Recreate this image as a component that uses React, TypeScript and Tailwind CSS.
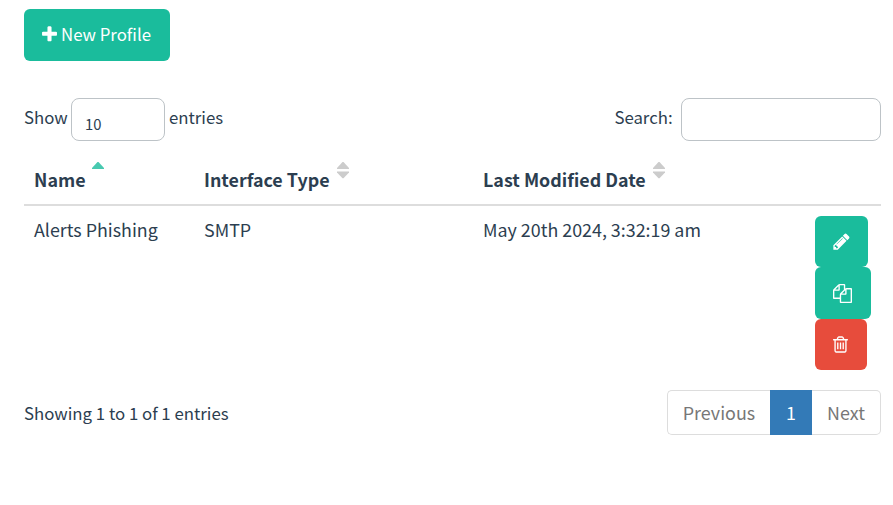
import type { ReactNode } from "react";

const PLUS =
  "M1600 736v192q0 40-28 68t-68 28h-416v416q0 40-28 68t-68 28h-192q-40 0-68-28t-28-68v-416h-416q-40 0-68-28t-28-68v-192q0-40 28-68t68-28h416v-416q0-40 28-68t68-28h192q40 0 68 28t28 68v416h416q40 0 68 28t28 68z";
const PENCIL =
  "M491 1536l91-91-235-235-91 91v107h128v128h107zm523-928q0-22-22-22-10 0-17 7l-542 542q-7 7-7 17 0 22 22 22 10 0 17-7l542-542q7-7 7-17zm-54-192l416 416-832 832h-416v-416zm683 96q0 53-37 90l-166 166-416-416 166-165q36-38 90-38 53 0 91 38l235 234q37 39 37 91z";
const FILES =
  "M1696 384q40 0 68 28t28 68v1216q0 40-28 68t-68 28h-960q-40 0-68-28t-28-68v-288h-544q-40 0-68-28t-28-68v-672q0-40 20-88t48-76l408-408q28-28 76-48t88-20h416q40 0 68 28t28 68v328q68-40 128-40h416zm-544 213l-299 299h299v-299zm-640-384l-299 299h299v-299zm196 647l316-316v-416h-384v416q0 40-28 68t-68 28h-416v640h512v-256q0-40 20-88t48-76zm956 804v-1152h-384v416q0 40-28 68t-68 28h-416v640h896z";
const TRASH =
  "M704 736v576q0 14-9 23t-23 9h-64q-14 0-23-9t-9-23v-576q0-14 9-23t23-9h64q14 0 23 9t9 23zm256 0v576q0 14-9 23t-23 9h-64q-14 0-23-9t-9-23v-576q0-14 9-23t23-9h64q14 0 23 9t9 23zm256 0v576q0 14-9 23t-23 9h-64q-14 0-23-9t-9-23v-576q0-14 9-23t23-9h64q14 0 23 9t9 23zm128 724v-948h-896v948q0 22 7 40.5t14.5 27 10.5 8.5h832q3 0 10.5-8.5t14.5-27 7-40.5zm-672-1076h448l-48-117q-7-9-17-11h-317q-10 2-17 11zm928 32v64q0 14-9 23t-23 9h-96v948q0 83-47 143.5t-113 60.5h-832q-66 0-113-58.5t-47-141.5v-952h-96q-14 0-23-9t-9-23v-64q0-14 9-23t23-9h309l70-167q15-37 54-63t79-26h320q40 0 79 26t54 63l70 167h309q14 0 23 9t9 23z";

function Icon({ d, className }: { d: string; className: string }) {
  return (
    <svg viewBox="0 0 1792 1792" fill="currentColor" className={`shrink-0 ${className}`}>
      <path d={d} />
    </svg>
  );
}

function SortArrows({ both }: { both?: boolean }) {
  return (
    <svg
      viewBox="0 0 12 17"
      className={`h-[17px] w-3 shrink-0 ${both ? "fill-[#cccccc]" : "fill-[#48c9b0]"}`}
    >
      <path d="M0 7V6L5.5 0h1L12 6v1z" />
      {both && <path d="M0 9.5v1L5.5 16.3h1l5.5-5.8v-1z" />}
    </svg>
  );
}

function HeaderCell({ label, both, className }: { label: string; both?: boolean; className: string }) {
  return (
    <div role="columnheader" className={`flex items-start whitespace-nowrap ${className}`}>
      <span className="pt-[7px] leading-7">{label}</span>
      <span className={`mt-[3.5px] ${both ? "ml-[7px]" : "ml-[6.5px]"}`}>
        <SortArrows both={both} />
      </span>
    </div>
  );
}

function Button({ children, className }: { children: ReactNode; className: string }) {
  return <button className={`flex items-center rounded-[6px] text-white ${className}`}>{children}</button>;
}

export default function App() {
  return (
    <main className="h-[505px] w-[893px] overflow-hidden bg-white pl-6 pr-3 pt-[9px] font-['Noto_Sans_CJK_SC','Source_Sans_Pro',sans-serif] text-[16.8px] text-[#2c3e50]">
      <Button className="h-[52px] w-[146px] bg-[#1abc9c] pl-4">
        <Icon d={PLUS} className="size-[19px] -translate-y-px" />
        <span className="ml-0.5 whitespace-nowrap">New Profile</span>
      </Button>

      <div className="mt-[37px] flex h-[43px] justify-between leading-[38px]">
        <label className="flex whitespace-nowrap">
          <span className="w-[47px]">Show</span>
          <span className="mr-1 block h-[43px] w-[94px] rounded-lg border border-[#bdc3c7] pl-[13px] pt-[6px] text-[14.8px]">
            10
          </span>
          entries
        </label>
        <label className="flex whitespace-nowrap">
          Search:
          <input className="ml-[8.4px] h-[43px] w-[200px] rounded-lg border border-[#bdc3c7]" />
        </label>
      </div>

      <div role="table" className="mt-[17px] text-[17.88px]">
        <div role="row" className="flex h-12 border-b-2 border-[#dddddd] pl-2.5 font-bold">
          <HeaderCell label="Name" className="w-[170px]" />
          <HeaderCell label="Interface Type" both className="w-[279px]" />
          <HeaderCell label="Last Modified Date" both className="w-[332px]" />
        </div>
        <div role="row" className="flex h-[184px] pl-2.5 pt-2.5 leading-[26px]">
          <div className="w-[170px] whitespace-nowrap">Alerts Phishing</div>
          <div className="w-[279px]">SMTP</div>
          <div className="w-[332px] whitespace-nowrap">May 20th 2024, 3:32:19 am</div>
          <div className="flex flex-col items-start">
            <Button className="h-[51px] w-[53px] bg-[#1abc9c] pl-[17px]">
              <Icon d={PENCIL} className="size-[19px]" />
            </Button>
            <Button className="h-[52px] w-[56px] bg-[#1abc9c] pl-[18px]">
              <Icon d={FILES} className="size-[19px]" />
            </Button>
            <Button className="h-[51px] w-[52px] bg-[#e74c3c] pl-[16px]">
              <Icon d={TRASH} className="size-[19px]" />
            </Button>
          </div>
        </div>
      </div>

      <div className="flex h-[45px] justify-between">
        <div className="leading-[46px]">Showing 1 to 1 of 1 entries</div>
        <nav className="flex text-[17.9px] leading-[43px] text-[#777777]">
          <span className="w-[103px] rounded-l-[5px] border border-r-0 border-[#dddddd] text-center">Previous</span>
          <span className="w-[42px] border border-[#337ab7] bg-[#337ab7] text-center text-white">1</span>
          <span className="w-[69px] rounded-r-[5px] border border-l-0 border-[#dddddd] text-center">Next</span>
        </nav>
      </div>
    </main>
  );
}
